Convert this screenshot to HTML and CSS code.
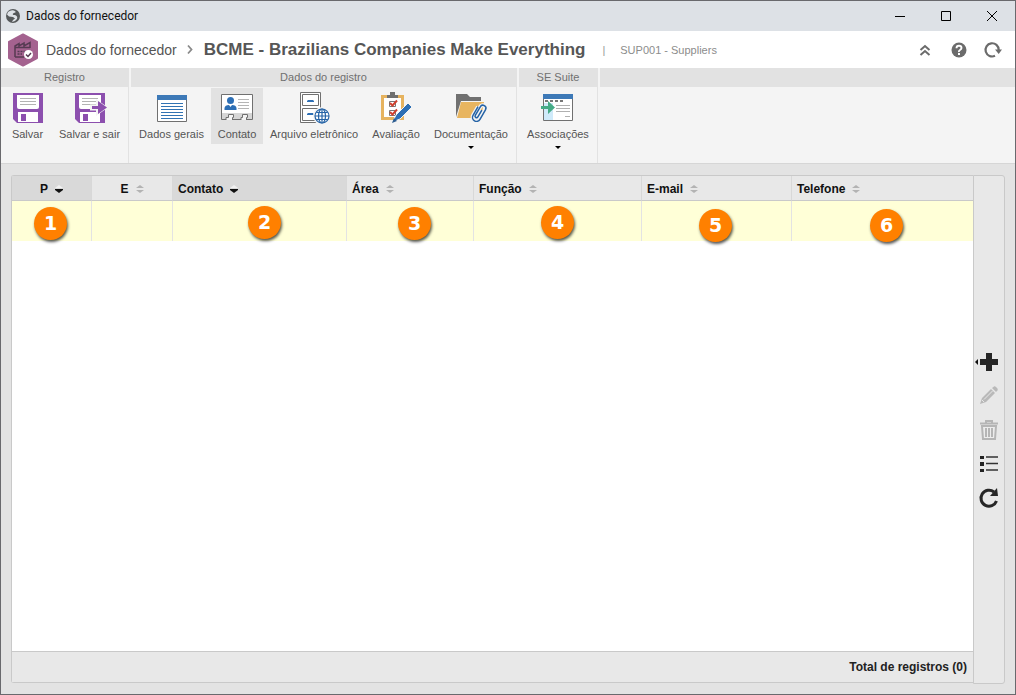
FILE: index.html
```html
<!DOCTYPE html>
<html lang="pt-BR">
<head>
<meta charset="utf-8">
<title>Dados do fornecedor</title>
<link rel="stylesheet" href="styles.css">
</head>
<body>
<svg width="0" height="0" class="defs" aria-hidden="true">
  <symbol id="sort" viewBox="0 0 8 8"><path d="M4 0L8 3H0z"/><path d="M0 5H8L4 8z"/></symbol>
  <symbol id="sort-down" viewBox="0 0 8 8"><path fill="#f2f2f2" d="M4 0L8 3H0z"/><path d="M0 4H8V5L4 8L0 5z"/></symbol>
  <symbol id="floppy" viewBox="0 0 32 32"><path fill="#8c4fae" d="M1 1H31V31H5L1 27z"/><path fill="#fff" d="M5 3H27V15Q27 17 25 17H7Q5 17 5 15z"/><path d="M8 6.500H24M8 9.500H24M8 12.500H24" stroke="#b3b3b3"/><path fill="#fff" d="M6 20H26V30H6z"/><path fill="#8c4fae" d="M9 22H14V29H9z"/></symbol>
</svg>
<div class="window">
  <header class="titlebar">
    <svg width="16" height="16" viewBox="0 0 16 16"><circle cx="8" cy="8" r="7" fill="#55585a"/><path d="M3 4Q6 1.500 9 2.500L11 4L8 5.500Q7 7 10 7Q13 8 12 11Q10 14 7 14L8 12L10 10.500L8 9L4 8.500L2 6.500z" fill="#dde1e6"/></svg>
    <span class="titlebar-text">Dados do fornecedor</span>
    <div class="window-controls">
      <button aria-label="Minimizar"><svg width="10" height="10"><path d="M0 5.500H10" stroke="#000"/></svg></button>
      <button aria-label="Maximizar"><svg width="10" height="10"><path d="M.5.5H9.500V9.500H.5z" fill="none" stroke="#000"/></svg></button>
      <button aria-label="Fechar"><svg width="10" height="10"><path d="M0 0L10 10M10 0L0 10" stroke="#000"/></svg></button>
    </div>
  </header>

  <div class="heading">
    <svg class="logo" width="30" height="34" viewBox="0 0 30 34"><path fill="#a4628f" stroke="#a4628f" stroke-width="2" stroke-linejoin="round" d="M15 1.500L29 9V25L15 32.500L1 25V9z"/><path d="M7 24V13L11 10.500V13L16 10V13L22 9.500V15M7 14.500H22M7 24H16" fill="none" stroke="#553a52" stroke-width="1.500"/><path d="M9.500 18.500H17M9.500 21H14" stroke="#553a52" stroke-width="1.500" stroke-dasharray="2 1"/><circle cx="20.500" cy="21.500" r="4.500" fill="#fff"/><path d="M18 21.500L20 23.500L23 20" fill="none" stroke="#553a52" stroke-width="1.500"/></svg>
    <span class="crumb">Dados do fornecedor</span>
    <svg class="chevron" width="6" height="9" viewBox="0 0 6 9"><path d="M1 .5L4.500 4.500L1 8.500" fill="none" stroke="#8a8a8a" stroke-width="1.800"/></svg>
    <h1>BCME - Brazilians Companies Make Everything</h1>
    <span class="divider">|</span>
    <span class="code">SUP001 - Suppliers</span>
    <div class="heading-actions">
      <button aria-label="Recolher"><svg width="18" height="18" viewBox="0 0 18 18"><path d="M4.500 9L9 5L13.500 9M4.500 14L9 10L13.500 14" fill="none" stroke="#6b6b6b" stroke-width="2"/></svg></button>
      <button aria-label="Ajuda"><svg width="18" height="18" viewBox="0 0 18 18"><circle cx="9" cy="9" r="7.500" fill="#6b6b6b"/><path d="M6.500 7.200Q6.500 4.800 9 4.800T11.500 7Q11.500 8.200 10 9T9 11" fill="none" stroke="#fff" stroke-width="1.900"/><path d="M8 12H10V14H8z" fill="#fff"/></svg></button>
      <button aria-label="Atualizar"><svg width="18" height="18" viewBox="0 0 18 18"><path d="M11 14.800A6.600 6.600 0 1 1 14.700 9" fill="none" stroke="#6b6b6b" stroke-width="2.200"/><path d="M11 8.500H18L14.700 13z" fill="#6b6b6b"/></svg></button>
    </div>
  </div>

  <nav class="ribbon">
    <section class="group group-record">
      <h2>Registro</h2>
      <div class="tools">
        <button><svg width="32" height="32"><use href="#floppy"/></svg>Salvar</button>
        <button><svg width="32" height="32" viewBox="0 0 32 32"><use href="#floppy" width="32" height="32"/><path d="M16 12.500H22V7L34 15.500L22 24V18.500H16z" fill="#f4f4f4"/><path d="M18 14H24V9L33 15.500L24 22V17H18z" fill="#8c4fae"/></svg>Salvar e sair</button>
      </div>
    </section>
    <section class="group group-data">
      <h2>Dados do registro</h2>
      <div class="tools">
        <button><svg width="32" height="32" viewBox="0 0 32 32"><path d="M1.500 3.500H30.500V29.500H1.500z" fill="#fff" stroke="#707070"/><path d="M1 3H31V8H1z" fill="#3d79b7"/><path d="M5 11.500H27M5 14.500H27M5 17.500H27M5 20.500H27M5 23.500H27M5 26.500H27" stroke="#3173b3"/></svg>Dados gerais</button>
        <button class="active"><svg width="32" height="32" viewBox="0 0 32 32"><path d="M.5 2.500H31.500V27.500H.5z" fill="#fff" stroke="#707070"/><path d="M1 21H31V27H1z" fill="#d6d6d6"/><path d="M5 28V25.500H7.500V22.500H12.500V25.500H11.500V28M20 28V25.500H21.500V22.500H26.500V25.500H25.500V28" fill="#f4f4f4" stroke="#707070"/><circle cx="9.500" cy="8.500" r="3.500" fill="#2d6fb5"/><path d="M3.500 18V16Q4 13 8 13L9.500 15L11 13Q15 13 15.500 16V18z" fill="#2d6fb5"/><path d="M17 7.500H28M17 10.500H28M17 13.500H28M17 16.500H28" stroke="#b5b5b5"/></svg>Contato</button>
        <button><svg width="32" height="32" viewBox="0 0 32 32"><path d="M2.500.5H22.500V30.500H2.500zM4.500 2.500H20.500V13.500H4.500zM4.500 16.500H20.500V28.500H4.500z" fill="#fff" stroke="#707070"/><path d="M9 10V9L10 8H15L16 9V10zM9 23V22L10 21H15L16 22V23z" fill="#2d6fb5"/><circle cx="24" cy="24" r="9" fill="#f4f4f4"/><g fill="#fff" stroke="#2563a6" stroke-width="1.200"><circle cx="24" cy="24" r="7"/><ellipse cx="24" cy="24" rx="3.500" ry="7"/><path d="M24 17V31M17 24H31M18.500 20.500H29.500M18.500 27.500H29.500" fill="none"/></g></svg>Arquivo eletrônico</button>
        <button><svg width="32" height="32" viewBox="0 0 32 32"><path d="M2.500 4.500H22.500V26.500H2.500z" fill="#fff" stroke="#e6b35f" stroke-width="3"/><path d="M7 6V3H10V0H15V3H18V6z" fill="#707070"/><path d="M9.500 9.500H15.500V14.500H9.500zM9.500 18.500H15.500V23.500H9.500z" fill="none" stroke="#777"/><path d="M10 11L12.500 13.500L17 8.500M10 20L12.500 22.500L17 17.500" fill="none" stroke="#cf402e" stroke-width="2"/><path d="M14 27L16 23L28 11L32 15L20 27L15 29z" fill="#2d6fb5" stroke="#f4f4f4"/><path d="M12 31L14 26L17 29z" fill="#2d5d91"/></svg>Avaliação</button>
        <button><svg width="32" height="32" viewBox="0 0 32 32"><path d="M1 2H12L15 5H26V9H6L1 25z" fill="#707070"/><path d="M6 10H29L26 26H2z" fill="#e8b560"/><g fill="none" transform="rotate(30 24 21)"><path d="M20 16V26A4 4 0 0 0 28 26V15A3 3 0 0 0 22 15V25A1.500 1.500 0 0 0 25 25V17" stroke="#f4f4f4" stroke-width="4"/><path d="M20 16V26A4 4 0 0 0 28 26V15A3 3 0 0 0 22 15V25A1.500 1.500 0 0 0 25 25V17" stroke="#2563a6" stroke-width="1.500"/></g></svg>Documentação<i class="caret"></i></button>
      </div>
    </section>
    <section class="group group-suite">
      <h2>SE Suite</h2>
      <div class="tools">
        <button><svg width="32" height="32" viewBox="0 0 32 32"><path d="M1.500 2.500H30.500V28.500H1.500z" fill="#fff" stroke="#707070"/><path d="M1 2H31V7H1z" fill="#3d79b7"/><path d="M2 11H11V28H2z" fill="#cfeafa"/><path d="M3 9H21" stroke="#777" stroke-width="2" stroke-dasharray="3 2"/><path d="M14 13.500H28M14 16.500H28M14 19.500H28M23 24.500H28" stroke="#b0b0b0"/><path d="M-1 14H6V9L13 15.500L6 22V17H-1z" fill="#45ab86"/></svg>Associações<i class="caret"></i></button>
      </div>
    </section>
    <section class="group group-rest"><h2></h2></section>
  </nav>

  <main class="content">
    <div class="grid">
      <table>
        <colgroup><col class="c-p"><col class="c-e"><col class="c-contact"><col class="c-area"><col class="c-role"><col class="c-mail"><col></colgroup>
        <thead>
          <tr>
            <th class="center sorted"><button>P<svg width="8" height="8"><use href="#sort-down"/></svg></button></th>
            <th class="center"><button>E<svg width="8" height="8"><use href="#sort"/></svg></button></th>
            <th class="sorted"><button>Contato<svg width="8" height="8"><use href="#sort-down"/></svg></button></th>
            <th><button>Área<svg width="8" height="8"><use href="#sort"/></svg></button></th>
            <th><button>Função<svg width="8" height="8"><use href="#sort"/></svg></button></th>
            <th><button>E-mail<svg width="8" height="8"><use href="#sort"/></svg></button></th>
            <th><button>Telefone<svg width="8" height="8"><use href="#sort"/></svg></button></th>
          </tr>
        </thead>
        <tbody>
          <tr>
            <td><span class="pin pin-1">1</span></td>
            <td></td>
            <td><span class="pin pin-2">2</span></td>
            <td><span class="pin pin-3">3</span></td>
            <td><span class="pin pin-4">4</span></td>
            <td><span class="pin pin-5">5</span></td>
            <td><span class="pin pin-6">6</span></td>
          </tr>
        </tbody>
      </table>
      <footer class="grid-footer">Total de registros (0)</footer>
    </div>
    <aside class="side">
      <button aria-label="Adicionar"><svg width="28" height="20" viewBox="0 0 28 20"><path d="M3 7V13L0 10z" fill="#111"/><path d="M11 1H17V7H23V13H17V19H11V13H5V7H11z" fill="#262626"/></svg></button>
      <button aria-label="Editar" disabled><svg width="20" height="20" viewBox="0 0 20 20"><path d="M1 18L3 12L12 3L16 7L7 16zM13 2L15 .5Q16 0 17 1L18.500 2.500Q19 3.500 18.500 4.500L17 6z" fill="#b9b9b9"/><path d="M5 13.500L13.500 5M3 14L5 16" stroke="#e8e8e8"/></svg></button>
      <button aria-label="Excluir" disabled><svg width="20" height="20" viewBox="0 0 20 20"><path d="M1 3.500H19M7 3V1H13V3" fill="none" stroke="#b5b5b5" stroke-width="2"/><path d="M3 6H17L16 19H4z" fill="#ececec" stroke="#b5b5b5" stroke-width="2"/><path d="M7 8V17M10 8V17M13 8V17" stroke="#b5b5b5" stroke-width="2"/></svg></button>
      <button aria-label="Listar"><svg width="20" height="20" viewBox="0 0 20 20"><path d="M1 2H5V5H1zM1 8H5V12H1zM1 15H5V18H1z" fill="#222"/><path d="M7 3H19M7 9.500H19M7 16H19" stroke="#333" stroke-width="1.500"/></svg></button>
      <button aria-label="Recarregar"><svg width="20" height="20" viewBox="0 0 20 20"><path d="M17.500 13A8 8 0 1 1 15 4" fill="none" stroke="#262626" stroke-width="3"/><path d="M18 0L19 8H11z" fill="#262626"/></svg></button>
    </aside>
  </main>
</div>
</body>
</html>
```
FILE: styles.css
```css
* { box-sizing: border-box; }

body {
  margin: 0;
  font-family: "Liberation Sans", Arial, sans-serif;
  color: #555;
}

button {
  padding: 0;
  border: 0;
  background: none;
  font: inherit;
  color: inherit;
}

svg {
  display: block;
  overflow: visible;
}

.defs { position: absolute; }

.window {
  display: flex;
  flex-direction: column;
  min-height: 100vh;
  border: 1px solid #69696d;
  background: #e3e3e3;
}

.titlebar {
  display: flex;
  align-items: center;
  height: 30px;
  padding-left: 4px;
  background: #dde1e6;
}

.titlebar-text {
  margin-left: 5px;
  font: 12px Roboto, "Open Sans", sans-serif;
  color: #111;
}

.window-controls {
  display: flex;
  margin-left: auto;
}

.window-controls button {
  display: grid;
  place-items: center;
  width: 46px;
  height: 30px;
}

.heading {
  display: flex;
  align-items: center;
  height: 37px;
  padding: 0 13px 0 7px;
  background: #fff;
}

.crumb {
  margin-left: 8px;
  font-size: 14px;
  color: #555;
}

.chevron { margin: 0 11px 0 10px; }

.heading h1 {
  margin: 0;
  font-size: 17px;
  color: #565656;
}

.divider {
  margin: 0 15px 0 17px;
  font-size: 11px;
  color: #999;
}

.code {
  font-size: 11px;
  color: #8c8c8c;
}

.heading-actions {
  display: flex;
  gap: 16px;
  margin-left: auto;
}

.ribbon {
  display: flex;
  height: 96px;
  border-bottom: 1px solid #d6d6d6;
  background: #f4f4f4;
}

.group {
  border-right: 1px solid #e2e2e2;
}

.group-record { width: 128px; }
.group-data { width: 388px; }
.group-suite { width: 81px; }
.group-rest {
  flex: 1;
  border-right: 0;
}

.group h2 {
  height: 19px;
  margin: 0;
  background: #e2e2e2;
  font-size: 11px;
  font-weight: normal;
  line-height: 19px;
  text-align: center;
  color: #707070;
}

.group + .group h2 {
  border-left: 2px solid #f4f4f4;
}

.tools {
  display: grid;
  justify-content: center;
  padding: 1px 0 0 2px;
}

.group-record .tools { grid-template-columns: 48px 76px; }
.group-data .tools { grid-template-columns: 79px 52px 102px 62px 88px; }
.group-suite .tools { grid-template-columns: 78px; }

.tools button {
  display: flex;
  flex-direction: column;
  align-items: center;
  gap: 4px;
  height: 66px;
  padding-top: 4px;
  font-size: 11px;
  line-height: 12px;
  white-space: nowrap;
}

.tools .active {
  height: 56px;
  background: #e2e2e2;
}

.caret {
  margin-top: 2px;
  border: solid transparent;
  border-width: 3px 3px 0;
  border-top-color: #000;
}

.content {
  flex: 1;
  display: flex;
  padding: 11px 10px 10px;
}

.grid {
  flex: 1;
  display: flex;
  flex-direction: column;
  margin-bottom: 1px;
  border: 1px solid #c9c9c9;
  border-right: 0;
  border-radius: 3px 0 0 3px;
  background: #fff;
}

table {
  width: 100%;
  border-collapse: separate;
  border-spacing: 0;
  table-layout: fixed;
}

.c-p { width: 80px; }
.c-e { width: 81px; }
.c-contact { width: 174px; }
.c-area { width: 127px; }
.c-role { width: 168px; }
.c-mail { width: 150px; }

th {
  height: 25px;
  padding: 1px 5px 0;
  border-right: 1px solid #d8d8d8;
  border-bottom: 1px solid #c9c9c9;
  background: #e8e8e8;
  font-size: 12px;
  text-align: left;
  color: #111;
}

th.center { text-align: center; }
th.sorted { background: #d9d9d9; }

th button {
  display: inline-flex;
  align-items: center;
  gap: 7px;
}

th svg { fill: #b3b3b3; }
th.sorted svg { fill: #111; }

td {
  position: relative;
  height: 40px;
  padding: 0;
  border-right: 1px solid #e3e3e3;
  background: #ffffd7;
}

th:last-child,
td:last-child { border-right: 0; }

.pin {
  position: absolute;
  top: 6px;
  width: 33px;
  height: 33px;
  border-radius: 50%;
  background: #ff8000;
  box-shadow: 1px 2px 3px #000a;
  font: bold 19px/33px "DejaVu Sans", Verdana, sans-serif;
  text-align: center;
  color: #fff;
}

.pin-1 { left: 22px; }
.pin-2 { left: 75px; top: 5px; }
.pin-3 { left: 51px; }
.pin-4 { left: 67px; top: 5px; }
.pin-5 { left: 57px; top: 8px; }
.pin-6 { left: 78px; top: 8px; }

.grid-footer {
  margin-top: auto;
  padding-right: 6px;
  border-top: 1px solid #c9c9c9;
  background: #e8e8e8;
  font-size: 12px;
  font-weight: bold;
  line-height: 30px;
  text-align: right;
  color: #222;
}

.side {
  display: flex;
  flex-direction: column;
  align-items: center;
  justify-content: center;
  gap: 14px;
  width: 32px;
  border: 1px solid #c9c9c9;
  border-radius: 0 3px 3px 0;
  background: #e8e8e8;
}
```
